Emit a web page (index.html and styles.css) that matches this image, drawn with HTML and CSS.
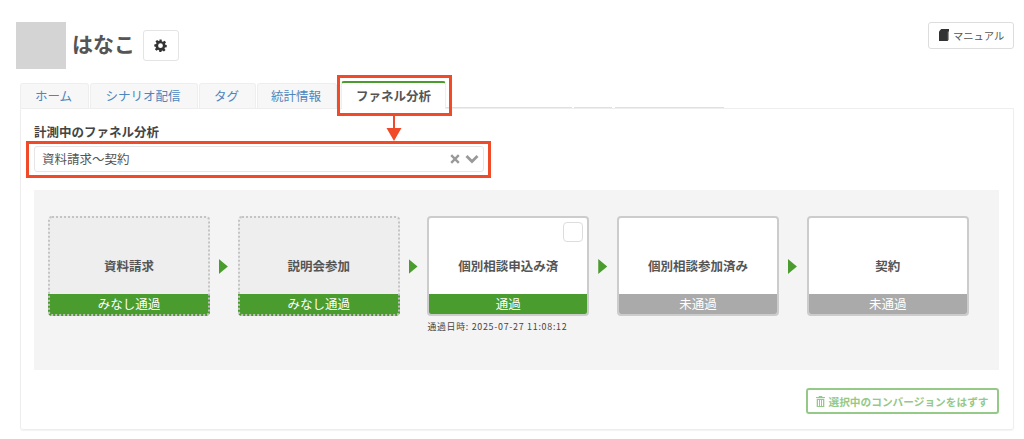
FILE: index.html
```html
<!DOCTYPE html>
<html lang="ja">
<head>
<meta charset="utf-8">
<title>ファネル分析</title>
<link rel="stylesheet" href="styles.css">
</head>
<body>
<div class="page">
  <header class="head">
    <div class="avatar"></div>
    <h1 class="name">はなこ</h1>
    <button class="gear-btn" type="button" aria-label="設定">
      <svg width="13" height="13" viewBox="0 0 24 24"><path fill="#333" fill-rule="evenodd" d="M10 1h4l.6 3.4 1.9.8 2.9-2 2.8 2.9-2 2.8.8 1.9L23.5 11v4l-3.4.6-.8 1.9 2 2.9-2.9 2.8-2.8-2-1.9.8L13.900 24h-4l-.6-3.4-1.900-.8-2.900 2-2.800-2.900 2-2.800-.8-1.900L.5 14v-4l3.400-.6.8-1.900-2-2.900 2.900-2.800 2.800 2 1.900-.8zM12 8a4.400 4.400 0 1 0 0 8.800a4.400 4.400 0 0 0 0-8.800z"/></svg>
    </button>
    <button class="manual-btn" type="button">
      <svg width="10" height="12" viewBox="0 0 10 12"><path fill="#333" d="M0 2.500 2.200 0H10v9.500L8.800 12H0z"/><path fill="#999" d="M8.800 2.500H10v7L8.800 12z"/></svg>
      マニュアル
    </button>
  </header>

  <nav class="tabs">
    <a class="tab tab-home">ホーム</a>
    <a class="tab tab-scenario">シナリオ配信</a>
    <a class="tab tab-tag">タグ</a>
    <a class="tab tab-stats">統計情報</a>
    <a class="tab tab-active">ファネル分析</a>
    <span class="ghost ghost-a"></span>
    <span class="ghost ghost-b"></span>
    <span class="ghost ghost-c"></span>
  </nav>

  <main class="panel">
    <div class="field-label">計測中のファネル分析</div>
    <div class="select">
      <span class="select-value">資料請求～契約</span>
      <svg class="select-x" width="10" height="10" viewBox="0 0 10 10"><path d="M1.200 1.200 8.800 8.800M8.800 1.200 1.200 8.800" stroke="#999" stroke-width="2.400" fill="none"/></svg>
      <svg class="select-chev" width="14" height="10" viewBox="0 0 14 10"><path d="M1.500 2 7 7.500 12.500 2" stroke="#999" stroke-width="2.800" fill="none"/></svg>
    </div>

    <section class="funnel">
      <div class="step">
        <div class="card card-assumed">
          <div class="card-name">資料請求</div>
          <div class="card-status">みなし通過</div>
        </div>
      </div>
      <div class="arrow"></div>
      <div class="step">
        <div class="card card-assumed">
          <div class="card-name">説明会参加</div>
          <div class="card-status">みなし通過</div>
        </div>
      </div>
      <div class="arrow"></div>
      <div class="step">
        <div class="card">
          <span class="check"></span>
          <div class="card-name">個別相談申込み済</div>
          <div class="card-status status-pass">通過</div>
        </div>
        <div class="pass-date">通過日時: 2025-07-27 11:08:12</div>
      </div>
      <div class="arrow"></div>
      <div class="step">
        <div class="card">
          <div class="card-name">個別相談参加済み</div>
          <div class="card-status status-none">未通過</div>
        </div>
      </div>
      <div class="arrow"></div>
      <div class="step">
        <div class="card">
          <div class="card-name">契約</div>
          <div class="card-status status-none">未通過</div>
        </div>
      </div>
    </section>

    <div class="actions">
      <button class="remove-btn" type="button">
        <svg width="9" height="11" viewBox="0 0 9 11"><path fill="#94c987" d="M3 0h3l.5 1H9v1H0V1h2.500zM.7 2.800h7.600V11H.7zM2 4v6h1V4zm2 0v6h1V4zm2 0v6h1V4z" fill-rule="evenodd"/></svg>
        選択中のコンバージョンをはずす
      </button>
    </div>
  </main>

  <div class="mark mark-tab"></div>
  <div class="mark mark-select"></div>
  <svg class="mark-arrow" width="16" height="27" viewBox="0 0 16 27"><path fill="#f04a28" d="M7 0h2v13h6.500L8 26 .5 13H7z"/></svg>
</div>
</body>
</html>
```

FILE: styles.css
```css
* { box-sizing: border-box; }
html, body { margin: 0; padding: 0; background: #fff; }
body {
  font-family: "Noto Sans CJK JP", "Liberation Sans", sans-serif;
  color: #555;
  font-size: 12.5px;
  overflow: hidden;
}
.page { position: relative; width: 1024px; height: 439px; padding: 22px 10px 0 16px; }

.head { display: flex; align-items: flex-start; height: 47px; }
.avatar { width: 50px; height: 47px; background: #d4d4d4; }
.name { margin: 6px 0 0 6px; font-size: 21px; line-height: 30px; font-weight: 700; color: #555; }
.gear-btn {
  display: flex; align-items: center; justify-content: center;
  width: 36px; height: 31px; margin: 8px 0 0 8px; padding: 0 1px 0 0;
  background: #fff; border: 1px solid #e4e4e4; border-radius: 3px;
}
.manual-btn {
  display: flex; align-items: center; gap: 4px;
  height: 27px; width: 86px; margin-left: auto; padding: 0 0 1px 10px;
  background: #fff; border: 1px solid #ddd; border-radius: 3px;
  font: 10.300px "Noto Sans CJK JP", sans-serif; color: #555;
}

.tabs { display: flex; align-items: flex-end; height: 27px; margin: 12px 0 0 4px; }
.tab {
  display: flex; align-items: center; justify-content: center;
  height: 25px; margin-right: 1px; padding-right: 2px;
  background: #f7f7f7; border: 1px solid #eee; border-bottom: 0; border-radius: 3px 3px 0 0;
  color: #4d86bd; line-height: 1;
}
.tab-home { width: 69px; }
.tab-scenario { width: 108px; }
.tab-tag { width: 57px; }
.tab-stats { width: 80px; margin-right: 4px; }
.tab-active {
  position: relative; z-index: 1;
  width: 105px; height: 28px; margin: 0 0 -1px; padding-right: 0;
  background: #fff; border-top: 2px solid #4a9c2f; border-color: #4a9c2f #eee #fff;
  color: #555; font-weight: 700;
}
.ghost { height: 1px; background: #e0e0e0; position: relative; top: 0; }
.ghost-a { width: 126px; margin-right: 2px; }
.ghost-b { width: 38px; margin-right: 3px; }
.ghost-c { width: 109px; }

.panel {
  height: 322px; margin-left: 4px;
  padding: 15px 14px 0 13px;
  border: 1px solid #eee; border-radius: 0 0 3px 3px;
  box-shadow: 0 1px 1px rgba(0,0,0,.05);
}
.field-label { font-weight: 700; line-height: 16px; color: #444; }
.select {
  display: flex; align-items: center;
  width: 450px; height: 26px; margin-top: 6px; padding: 0 4px 0 7px;
  border: 1px solid #e6e6e6; border-radius: 3px;
}
.select-value { flex: 1; color: #555; line-height: 1; }
.select-x { margin-right: 5px; }

.funnel {
  display: flex; align-items: flex-start;
  height: 180px; margin-top: 18px; padding: 26px 14px;
  background: #f4f4f4;
}
.step { width: 162px; flex: none; }
.arrow {
  flex: none; width: 9px; height: 15px; margin: 43px 9.850px 0 8.850px;
  background: #4a9c2f; clip-path: polygon(0 0, 100% 50%, 0 100%);
}
.card {
  position: relative;
  display: flex; flex-direction: column;
  height: 100px; background: #fff;
  border: 2px solid #ccc; border-radius: 4px; overflow: hidden;
}
.card-assumed {
  border: 2px dotted #c4c4c4;
  background: linear-gradient(#eee 0 78px, #4a9c2f 78px) border-box;
}
.card-name {
  flex: 1; display: flex; align-items: center; justify-content: center;
  margin-bottom: -20px;
  font-weight: 700; color: #555; line-height: 1;
}
.card-status {
  position: relative;
  height: 22px; margin: 0 -2px -2px; padding-bottom: 1px;
  display: flex; align-items: center; justify-content: center;
  color: #fff; line-height: 1;
}
.card-assumed .card-status { margin: 0; height: 20px; padding-bottom: 0; }
.status-pass { background: #4a9c2f; }
.status-none { background: #aaa; }
.check {
  position: absolute; top: 4px; right: 4px; z-index: 1;
  width: 20px; height: 20px;
  background: #fff; border: 1px solid #ddd; border-radius: 4px;
}
.pass-date { margin-top: 5px; font-size: 8.900px; line-height: 12px; letter-spacing: .72px; color: #444; }

.actions { display: flex; justify-content: flex-end; margin-top: 18px; }
.remove-btn {
  display: flex; align-items: center; justify-content: center; gap: 3px;
  width: 193px; height: 26px; padding: 0;
  background: #fff; border: 2px solid #94c987; border-radius: 3px;
  font: 700 10.700px "Noto Sans CJK JP", sans-serif; color: #94c987;
}

.mark { position: absolute; border: 3px solid #f04a28; pointer-events: none; }
.mark-tab { left: 337px; top: 75px; width: 115px; height: 41px; }
.mark-select { left: 26px; top: 141px; width: 465px; height: 37px; }
.mark-arrow { position: absolute; left: 386px; top: 115px; }
```
